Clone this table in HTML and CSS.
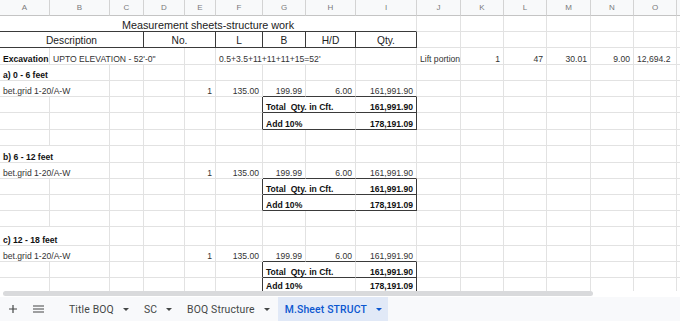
FILE: index.html
```html
<!DOCTYPE html>
<html>
<head>
<meta charset="utf-8">
<link rel="stylesheet" href="styles.css">
</head>
<body>
<div class="app">
  <div class="sheet">
    <!-- column headers -->
    <div class="c h">A</div><div class="c h">B</div><div class="c h">C</div><div class="c h">D</div><div class="c h">E</div><div class="c h">F</div><div class="c h">G</div><div class="c h">H</div><div class="c h">I</div><div class="c h">J</div><div class="c h">K</div><div class="c h">L</div><div class="c h">M</div><div class="c h">N</div><div class="c h">O</div><div class="c h"></div>

    <!-- row 1: title -->
    <div class="c s9 ctr title bb">Measurement sheets-structure work</div>
    <div class="c"></div><div class="c"></div><div class="c"></div><div class="c"></div><div class="c"></div><div class="c"></div><div class="c"></div>

    <!-- row 2: column titles -->
    <div class="c s3 ctr hd br bb">Description</div>
    <div class="c s2 ctr hd br bb">No.</div>
    <div class="c ctr hd br bb">L</div>
    <div class="c ctr hd br bb">B</div>
    <div class="c ctr hd br bb">H/D</div>
    <div class="c ctr hd br bb">Qty.</div>
    <div class="c"></div><div class="c"></div><div class="c"></div><div class="c"></div><div class="c"></div><div class="c"></div><div class="c"></div>

    <!-- row 3: excavation -->
    <div class="c b">Excavation</div>
    <div class="c s3">UPTO ELEVATION - 52'-0"</div>
    <div class="c"></div>
    <div class="c s3">0.5+3.5+11+11+11+15=52'</div>
    <div class="c"></div>
    <div class="c">Lift portion</div>
    <div class="c r">1</div>
    <div class="c r">47</div>
    <div class="c r">30.01</div>
    <div class="c r">9.00</div>
    <div class="c">12,694.2</div>
    <div class="c"></div>

    <!-- section a -->
    <div class="c s2 b">a) 0 - 6 feet</div>
    <div class="c"></div><div class="c"></div><div class="c"></div><div class="c"></div><div class="c"></div><div class="c"></div><div class="c"></div><div class="c"></div><div class="c"></div><div class="c"></div><div class="c"></div><div class="c"></div><div class="c"></div><div class="c"></div>

    <div class="c s2">bet.grid 1-20/A-W</div>
    <div class="c"></div><div class="c"></div>
    <div class="c r">1</div>
    <div class="c r">135.00</div>
    <div class="c r bb">199.99</div>
    <div class="c r bb">6.00</div>
    <div class="c r bb">161,991.90</div>
    <div class="c"></div><div class="c"></div><div class="c"></div><div class="c"></div><div class="c"></div><div class="c"></div><div class="c"></div>

    <div class="c"></div><div class="c"></div><div class="c"></div><div class="c"></div><div class="c"></div>
    <div class="c br"></div>
    <div class="c s2 b bb">Total  Qty. in Cft.</div>
    <div class="c r b br bb">161,991.90</div>
    <div class="c"></div><div class="c"></div><div class="c"></div><div class="c"></div><div class="c"></div><div class="c"></div><div class="c"></div>

    <div class="c"></div><div class="c"></div><div class="c"></div><div class="c"></div><div class="c"></div>
    <div class="c br"></div>
    <div class="c s2 b bb">Add 10%</div>
    <div class="c r b br bb">178,191.09</div>
    <div class="c"></div><div class="c"></div><div class="c"></div><div class="c"></div><div class="c"></div><div class="c"></div><div class="c"></div>

    <div class="c"></div><div class="c"></div><div class="c"></div><div class="c"></div><div class="c"></div><div class="c"></div><div class="c"></div><div class="c"></div><div class="c"></div><div class="c"></div><div class="c"></div><div class="c"></div><div class="c"></div><div class="c"></div><div class="c"></div><div class="c"></div>

    <!-- section b -->
    <div class="c s2 b">b) 6 - 12 feet</div>
    <div class="c"></div><div class="c"></div><div class="c"></div><div class="c"></div><div class="c"></div><div class="c"></div><div class="c"></div><div class="c"></div><div class="c"></div><div class="c"></div><div class="c"></div><div class="c"></div><div class="c"></div><div class="c"></div>

    <div class="c s2">bet.grid 1-20/A-W</div>
    <div class="c"></div><div class="c"></div>
    <div class="c r">1</div>
    <div class="c r">135.00</div>
    <div class="c r bb">199.99</div>
    <div class="c r bb">6.00</div>
    <div class="c r bb">161,991.90</div>
    <div class="c"></div><div class="c"></div><div class="c"></div><div class="c"></div><div class="c"></div><div class="c"></div><div class="c"></div>

    <div class="c"></div><div class="c"></div><div class="c"></div><div class="c"></div><div class="c"></div>
    <div class="c br"></div>
    <div class="c s2 b bb">Total  Qty. in Cft.</div>
    <div class="c r b br bb">161,991.90</div>
    <div class="c"></div><div class="c"></div><div class="c"></div><div class="c"></div><div class="c"></div><div class="c"></div><div class="c"></div>

    <div class="c"></div><div class="c"></div><div class="c"></div><div class="c"></div><div class="c"></div>
    <div class="c br"></div>
    <div class="c s2 b bb">Add 10%</div>
    <div class="c r b br bb">178,191.09</div>
    <div class="c"></div><div class="c"></div><div class="c"></div><div class="c"></div><div class="c"></div><div class="c"></div><div class="c"></div>

    <div class="c"></div><div class="c"></div><div class="c"></div><div class="c"></div><div class="c"></div><div class="c"></div><div class="c"></div><div class="c"></div><div class="c"></div><div class="c"></div><div class="c"></div><div class="c"></div><div class="c"></div><div class="c"></div><div class="c"></div><div class="c"></div>

    <!-- section c -->
    <div class="c s2 b">c) 12 - 18 feet</div>
    <div class="c"></div><div class="c"></div><div class="c"></div><div class="c"></div><div class="c"></div><div class="c"></div><div class="c"></div><div class="c"></div><div class="c"></div><div class="c"></div><div class="c"></div><div class="c"></div><div class="c"></div><div class="c"></div>

    <div class="c s2">bet.grid 1-20/A-W</div>
    <div class="c"></div><div class="c"></div>
    <div class="c r">1</div>
    <div class="c r">135.00</div>
    <div class="c r bb">199.99</div>
    <div class="c r bb">6.00</div>
    <div class="c r bb">161,991.90</div>
    <div class="c"></div><div class="c"></div><div class="c"></div><div class="c"></div><div class="c"></div><div class="c"></div><div class="c"></div>

    <div class="c"></div><div class="c"></div><div class="c"></div><div class="c"></div><div class="c"></div>
    <div class="c br"></div>
    <div class="c s2 b bb">Total  Qty. in Cft.</div>
    <div class="c r b br bb">161,991.90</div>
    <div class="c"></div><div class="c"></div><div class="c"></div><div class="c"></div><div class="c"></div><div class="c"></div><div class="c"></div>

    <div class="c"></div><div class="c"></div><div class="c"></div><div class="c"></div><div class="c"></div>
    <div class="c br"></div>
    <div class="c s2 b bb">Add 10%</div>
    <div class="c r b br bb">178,191.09</div>
    <div class="c"></div><div class="c"></div><div class="c"></div><div class="c"></div><div class="c"></div><div class="c"></div><div class="c"></div>
  </div>

  <div class="hscroll"><div class="thumb"></div></div>

  <div class="tabbar">
    <svg class="icon plus" viewBox="0 0 10 10" width="10" height="10"><path d="M5 1v8M1 5h8" stroke="#444746" stroke-width="1.2" fill="none"/></svg>
    <svg class="icon menu" viewBox="0 0 11 10" width="11" height="10"><path d="M0 2h11M0 5h11M0 8h11" stroke="#444746" stroke-width="1.1" fill="none"/></svg>
    <div class="tabs">
      <div class="tab"><span>Title BOQ</span><svg class="caret" viewBox="0 0 6 3" width="6" height="3"><polygon points="0,0 6,0 3,3" fill="#444746"/></svg></div>
      <div class="tab"><span>SC</span><svg class="caret" viewBox="0 0 6 3" width="6" height="3"><polygon points="0,0 6,0 3,3" fill="#444746"/></svg></div>
      <div class="tab"><span>BOQ Structure</span><svg class="caret" viewBox="0 0 6 3" width="6" height="3"><polygon points="0,0 6,0 3,3" fill="#444746"/></svg></div>
      <div class="tab active"><span>M.Sheet STRUCT</span><svg class="caret" viewBox="0 0 6 3" width="6" height="3"><polygon points="0,0 6,0 3,3" fill="#0b57d0"/></svg></div>
    </div>
  </div>
</div>
</body>
</html>
```

FILE: styles.css
```css
html, body {
  margin: 0;
  padding: 0;
  background: #ffffff;
}

.app {
  width: 680px;
  height: 321px;
  overflow: hidden;
  display: flex;
  flex-direction: column;
}

.sheet {
  display: grid;
  grid-template-columns: 50px 60px 34px 41px 31px 47px 43px 50px 61px 44px 43px 43px 44px 43px 43px 20px;
  grid-template-rows: 16px 16px 16px 17px 16px 16px 16px 17px 16px 17px 16px 16px 16px 16px 19px 16px 16px 14px;
  width: 680px;
  height: 291px;
  overflow: hidden;
  flex: none;
}

.c {
  box-sizing: border-box;
  border-right: 1px solid #e2e2e2;
  border-bottom: 1px solid #e2e2e2;
  font-family: "Liberation Sans", Arial, sans-serif;
  font-size: 8.6px;
  line-height: 10px;
  color: #333333;
  white-space: pre;
  overflow: hidden;
  display: flex;
  align-items: flex-end;
  justify-content: flex-start;
  padding: 0 3px 0 3px;
  min-width: 0;
}

.h {
  background: #f8f9fa;
  color: #7a7a7a;
  font-size: 8px;
  align-items: center;
  justify-content: center;
  padding: 0;
  border-right-color: #d3d3d3;
  border-bottom-color: #c4c4c4;
}

.s2 { grid-column: span 2; }
.s3 { grid-column: span 3; }
.s9 { grid-column: span 9; }

.r { justify-content: flex-end; }
.ctr { justify-content: center; }
.b { font-weight: bold; color: #111111; }

.title {
  font-size: 10.8px;
  color: #222222;
  line-height: 12px;
  padding-bottom: 0;
}

.hd {
  font-size: 10.2px;
  color: #222222;
  line-height: 12px;
  padding-bottom: 0;
}

.br { border-right-color: #3a3a3a; }
.bb { border-bottom-color: #3a3a3a; }

.hscroll {
  height: 6px;
  flex: none;
  background: #ffffff;
  padding-left: 3px;
  box-sizing: border-box;
}

.thumb {
  width: 590px;
  height: 5px;
  background: #d9dadc;
  border-radius: 3px;
}

.tabbar {
  flex: 1;
  display: flex;
  align-items: center;
  background: #f8f9fb;
}

.icon { flex: none; display: block; }
.plus { margin-left: 8px; }
.menu { margin-left: 15px; }

.tabs {
  display: flex;
  align-self: stretch;
  margin-left: 18px;
  gap: 2px;
}

.tab {
  display: flex;
  align-items: center;
  gap: 9px;
  padding: 0 6px 0 7px;
  font-family: Roboto, "Noto Sans", sans-serif;
  font-weight: 400;
  font-size: 10.4px;
  letter-spacing: 0.15px;
  color: #444746;
}

.tab.active {
  background: #e1e9f7;
  color: #0b57d0;
  font-weight: 500;
}

.caret { display: block; flex: none; }
```
